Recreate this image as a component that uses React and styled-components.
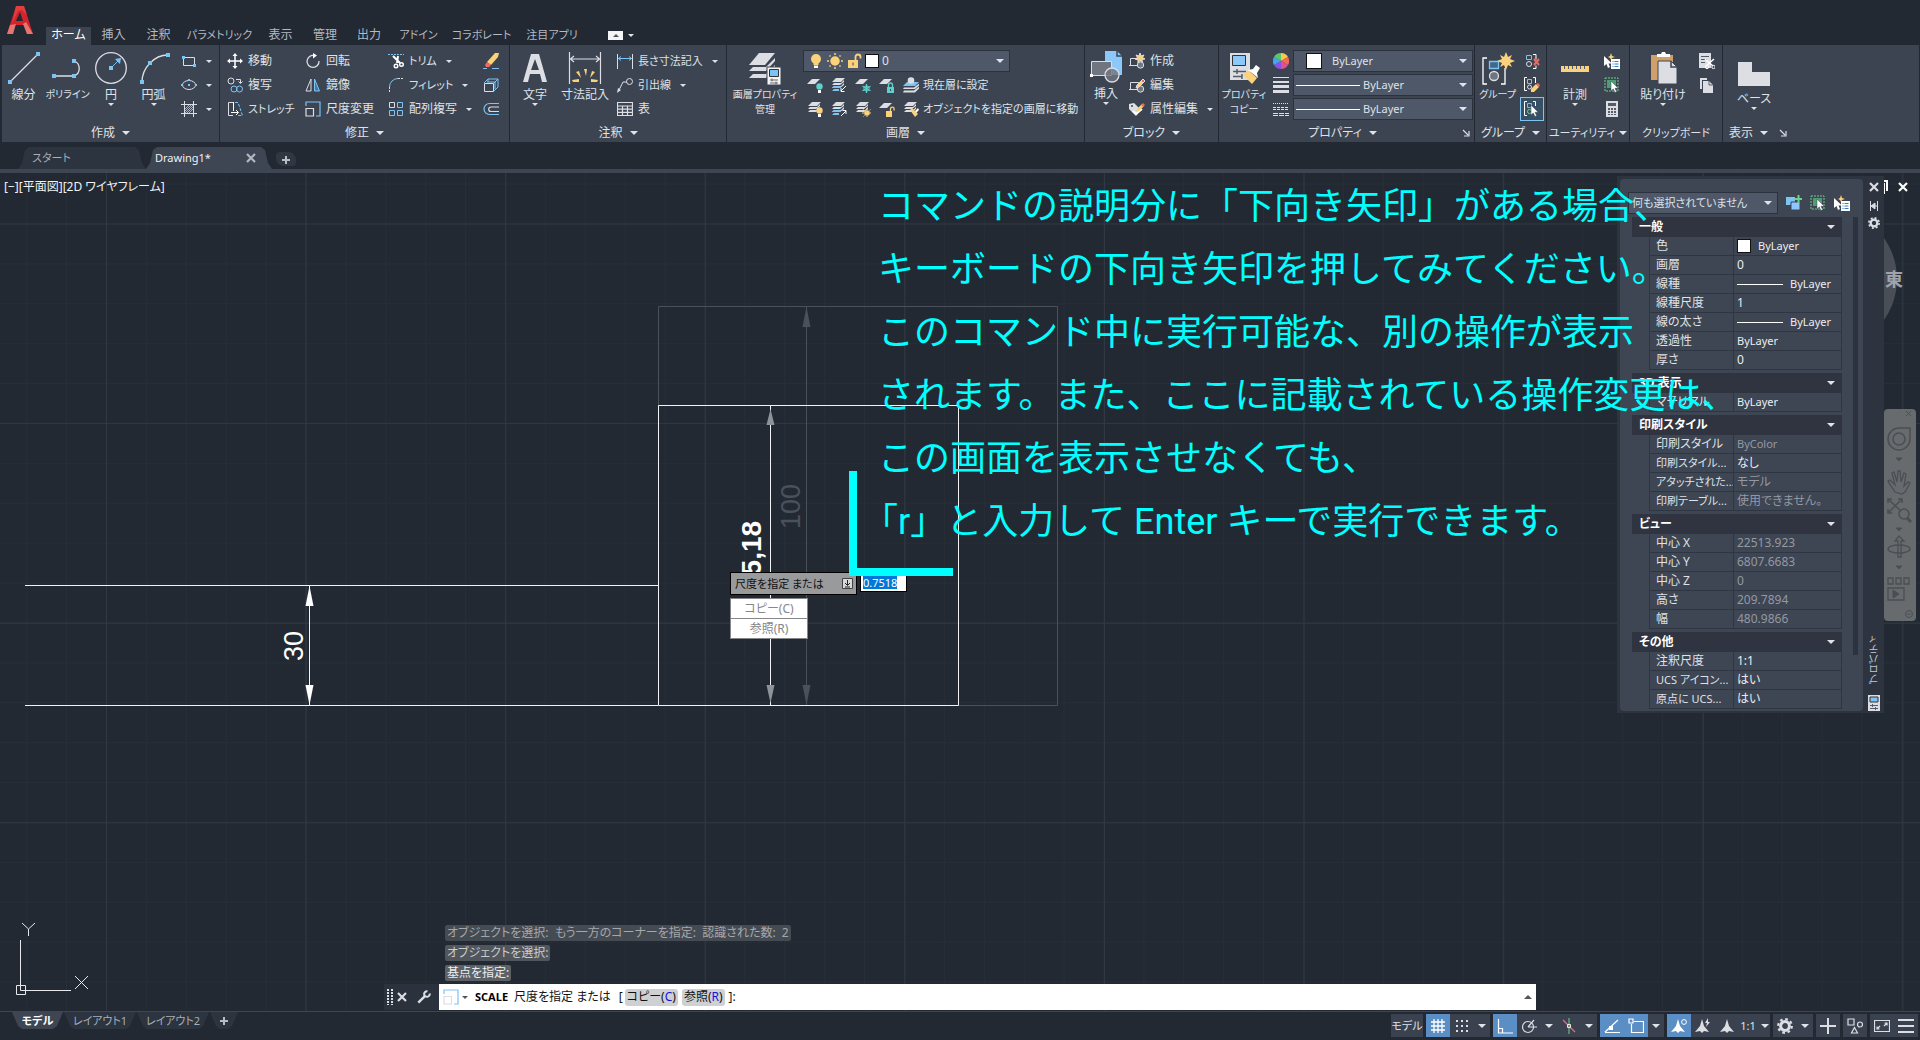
import styled, { createGlobalStyle } from "styled-components";

const W = "#dcdee3";
const B = "#7cc4f4";
const Y = "#fbd27c";
const G = "#6fd08c";
const P = "#3c4452";

const GlobalStyle = createGlobalStyle`
  * {
    box-sizing: border-box;
  }

  body {
    margin: 0;
    overflow: hidden;
    background-color: #222933;
    color: #dfe2e7;
    font-family: "Noto Sans", "Noto Sans CJK JP", sans-serif;
    font-size: 12px;
    line-height: 16px;
    font-feature-settings: "palt";
  }

  button, select, input {
    font: inherit;
    font-feature-settings: inherit;
    color: inherit;
    margin: 0;
    padding: 0;
    border: none;
    background: none;
    white-space: nowrap;
  }

  svg {
    display: block;
    flex: none;
  }
`;

/* ---------- icons, 16 grid ---------- */

const sheets = (
  <g fill={W}>
    <path d="M5 1h9l-4 4H1z" />
    <path d="M1 8l2-2h7l3-3v2l-4 3z" />
    <path d="M1 11l2-2h7l3-3v2l-4 3z" />
  </g>
);
const cursor = <path d="M7 4v10l2.300-2 1.600 3.500 1.800-.800L11 11.300h3.200z" fill="#fff" stroke={P} strokeWidth=".5" />;
const pencil = (
  <g>
    <path d="M7 11l1-3 5-5 2 2-5 5z" fill={Y} />
    <path d="M12 4l2-2 2 2-2 2z" fill="#f0695f" />
  </g>
);
const spark = (
  <path d="M11 0l1 3 3-1-1.500 2.500L16 6l-3 .500.500 3L11 7.500 9 10V7L6 6l2.500-1.500L7 2l3 1z" fill={Y} />
);

const icons = {
  rect: (
    <g fill="none" stroke={W}>
      <path d="M2.500 4.500h11v8h-11z" />
      <path d="M1 3h3v3H1zM12 11h3v3h-3z" fill={B} stroke="none" />
    </g>
  ),
  ellipse: (
    <g fill="none" stroke={W}>
      <ellipse cx="8" cy="8" rx="6.500" ry="4.500" />
      <path d="M7 7h2v2H7zM0 7h2v2H0zM14 7h2v2h-2zM7 2h2v2H7z" fill={B} stroke="none" />
    </g>
  ),
  hatch: (
    <g fill="none" stroke={W}>
      <path d="M3.500 0v16M12.500 0v16M0 3.500h16M0 12.500h16" />
      <path d="M4 8l4-4M4 12l8-8M8 12l4-4M4 10l6-6M6 12l6-6" stroke={B} />
    </g>
  ),
  move: (
    <g stroke="#fff" strokeWidth="1.500" fill="#fff">
      <path d="M8 2v12M2 8h12" />
      <path d="M8 0l2.500 3h-5zM8 16l2.500-3h-5zM0 8l3-2.500v5zM16 8l-3-2.500v5z" stroke="none" />
    </g>
  ),
  copy: (
    <g fill="none" stroke={W}>
      <circle cx="4" cy="4" r="3" />
      <path d="M9 2.500h4.500V6M11.500 4.500l2 2 2-2" />
      <circle cx="7" cy="12" r="3" stroke={B} />
      <circle cx="12.500" cy="12" r="3" stroke={B} />
    </g>
  ),
  stretch: (
    <g fill="none" stroke={W}>
      <path d="M6 1.500H1.500v13H6" />
      <path d="M6.500 1v9M4 11.500h7M9 9l2.500 2.500L9 14" stroke="#fff" />
      <path d="M8 1.500h3l4.500 13H11" stroke={B} strokeDasharray="3 1.500" />
    </g>
  ),
  rotate: (
    <g fill="none" stroke={W} strokeWidth="1.300">
      <path d="M9 2.500A6 6 0 1 0 14 8" />
      <path d="M8 0l4 2.500L8 5.500z" fill="#fff" stroke="none" />
    </g>
  ),
  mirror: (
    <g fill="none" stroke={W}>
      <path d="M6 2v12H1z" />
      <path d="M9.500 2v12h5z" stroke={B} fill="#4578a0" />
    </g>
  ),
  scale: (
    <g fill="none" stroke={B} strokeWidth="1.200">
      <path d="M1 5V1h14v14h-4" />
      <path d="M1 7.500h7.500V15H1z" stroke={W} />
    </g>
  ),
  trim: (
    <g fill="none" stroke="#fff" strokeWidth="1.400">
      <path d="M0 1.500h16" strokeDasharray="2 1" stroke={B} strokeWidth="1" />
      <path d="M5 3l7 7M10 3L9 10" strokeWidth="2" />
      <circle cx="8" cy="13" r="1.800" />
      <circle cx="13.500" cy="11.500" r="1.800" />
    </g>
  ),
  fillet: (
    <g fill="none" stroke={W}>
      <path d="M1.500 15v-5M10 1.500h6" strokeDasharray="2 1" />
      <path d="M1.500 10A8.500 8.500 0 0 1 10 1.500" stroke={B} />
    </g>
  ),
  array: (
    <g fill="none" stroke={B}>
      <path d="M1.500 1.500h5v5h-5z" stroke={W} />
      <path d="M9.500 1.500h5v5h-5zM1.500 9.500h5v5h-5zM9.500 9.500h5v5h-5z" />
    </g>
  ),
  erase: (
    <g>
      <path d="M4 9l8-9h4l-1 4-7 8z" fill={Y} />
      <path d="M4 9l4 3-2 2H3l-1-2z" fill="#f0695f" />
      <path d="M0 15.500h4M9 15.500h7" stroke={B} />
    </g>
  ),
  box3d: (
    <g fill="none" stroke={B}>
      <path d="M1 6l4-4h10v8l-4 4M5 2v3M11 6l4-4" />
      <path d="M1.500 6.500h9v8h-9z" stroke={W} />
      <path d="M4 5h8v7" />
    </g>
  ),
  offset: (
    <g fill="none" stroke={W} strokeWidth="1.200">
      <path d="M16 2.500H6.500a5.500 5.500 0 0 0 0 11H16" stroke={B} />
      <path d="M16 6H8a2.200 2.200 0 0 0 0 4.500h8" />
    </g>
  ),
  linear: (
    <g fill="none" stroke={W}>
      <path d="M.500 1v15M15.500 1v15" />
      <path d="M1 5.500h14M4 3.500l-2.500 2L4 7.500M12 3.500l2.500 2-2.500 2" stroke={B} />
    </g>
  ),
  leader: (
    <g fill="none" stroke={W}>
      <path d="M2 13L6 5h4" />
      <circle cx="12.500" cy="4.500" r="3" />
      <path d="M0 16l1-5 3 2z" fill={W} stroke="none" />
    </g>
  ),
  table: (
    <path d="M.500 1.500h15v13H.500zM.500 5h15M.500 8.200h15M.500 11.400h15M5.500 5v10M10.500 5v10" fill="none" stroke={W} strokeWidth="1.200" />
  ),
  bulb: (
    <g>
      <circle cx="8" cy="6" r="5" fill={Y} />
      <path d="M5.500 9h5v3h-5z" fill={Y} />
      <path d="M6 12.500h4V15H6z" fill="#fff" />
    </g>
  ),
  sun: (
    <g stroke={Y} strokeWidth="1.500">
      <circle cx="8" cy="8" r="4" fill={Y} />
      <path d="M8 0v2M8 14v2M0 8h2M14 8h2M2.500 2.500l1 1M12.500 12.500l1 1M13.500 2.500l-1 1M3.500 12.500l-1 1" />
    </g>
  ),
  unlock: (
    <g>
      <path d="M2 7h10v8H2z" fill={Y} />
      <path d="M9.500 8V4a2.500 2.500 0 0 1 5 0v1.500" fill="none" stroke={Y} strokeWidth="1.800" />
      <path d="M6.500 9.500h1v3h-1z" fill={P} />
    </g>
  ),
  layOff: (
    <g>
      <path d="M5 2h8L8 7H0z" fill={W} />
      <circle cx="12.500" cy="9.500" r="3.200" fill="#5fd0cc" />
      <path d="M11 13h3v3h-3z" fill="#fff" />
    </g>
  ),
  layIso: (
    <g>
      {sheets}
      <path d="M1 11l2-2h7l-1 2zM1 14l2-2h5v2z" fill={B} />
      <path d="M15 9l-5 5M10 11v3.500h3.500" fill="none" stroke="#fff" />
    </g>
  ),
  layFreeze: (
    <g>
      <path d="M5 2h8L8 7H0z" fill={W} />
      <path d="M11.500 7v9M7.500 9.200l8 4.600M15.500 9.200l-8 4.600" stroke="#5fd0cc" strokeWidth="1.300" />
      <circle cx="11.500" cy="11.500" r="2.600" fill="none" stroke="#5fd0cc" />
    </g>
  ),
  layLock: (
    <g>
      <path d="M5 2h8L8 7H0z" fill={W} />
      <path d="M8 10h7v6H8z" fill="#5fd0cc" />
      <path d="M9.500 10V8a2 2 0 0 1 4 0v2" fill="none" stroke="#5fd0cc" strokeWidth="1.400" />
      <path d="M11 12h1v2h-1z" fill={P} />
    </g>
  ),
  layCurrent: (
    <g>
      <path d="M0 9l4-4h12l-4 4z" fill={B} />
      <circle cx="8" cy="3.500" r="3.300" fill={W} />
      <path d="M0 12l1-1.500h10l5-4v2l-4 3.500zM0 15.500l1-2h10l5-4v2l-4 4z" fill={W} />
    </g>
  ),
  layOn: (
    <g>
      {sheets}
      <circle cx="12.500" cy="9.500" r="3.200" fill={Y} />
      <path d="M11 13h3v3h-3z" fill="#fff" />
    </g>
  ),
  layUniso: (
    <g>
      {sheets}
      <path d="M1 11l2-2h7l-1 2zM1 14l2-2h5v2z" fill={B} />
      <path d="M10 15l5-5M11.500 9.500H15V13" fill="none" stroke="#fff" />
    </g>
  ),
  layThaw: (
    <g>
      {sheets}
      <circle cx="12" cy="12" r="2.800" fill={Y} />
      <path d="M12 7v2M12 15v1M7 12h2M15 12h1M8.500 8.500l1 1M15.500 8.500l-1 1M8.500 15.500l1-1" stroke={Y} />
    </g>
  ),
  layUnlock: (
    <g>
      <path d="M5 2h8L8 7H0z" fill={W} />
      <path d="M7 10h6v6H7z" fill={Y} />
      <path d="M11.500 10V8a1.800 1.800 0 0 1 3.600 0v1.500" fill="none" stroke={Y} strokeWidth="1.300" />
    </g>
  ),
  layMatch: (
    <g>
      {sheets}
      <path d="M7 9l2-2 6 6-3 3z" fill={Y} />
      <path d="M12 10l3-3 1 2-3 3z" fill="#fff" />
    </g>
  ),
  blkCreate: (
    <g fill="none" stroke={W}>
      <path d="M1.500 5.500h8v7h-8zM0 12.500h3" />
      <circle cx="11.500" cy="12" r="3.200" fill="#70757f" />
      {spark}
    </g>
  ),
  blkEdit: (
    <g fill="none" stroke={W}>
      <path d="M1.500 5.500h8v7h-8zM0 12.500h3" />
      <circle cx="11.500" cy="12" r="3.200" fill="#70757f" />
      {pencil}
    </g>
  ),
  blkAttr: (
    <g>
      <path d="M0 3l5-1 7 7-5 6-7-7z" fill={W} />
      <path d="M4 10l3 3 6-5" fill="none" stroke="#fff" strokeWidth="2" />
      <circle cx="3" cy="5" r="1" fill={P} />
      {pencil}
    </g>
  ),
  wheel: (
    <g>
      <path d="M8 8V0a8 8 0 0 1 7 4z" fill="#f7c84c" />
      <path d="M8 8l7-4a8 8 0 0 1 0 8z" fill="#f0695f" />
      <path d="M8 8l7 4a8 8 0 0 1-7 4z" fill="#e0508c" />
      <path d="M8 8v8a8 8 0 0 1-7-4z" fill="#8a50e8" />
      <path d="M8 8l-7 4a8 8 0 0 1 0-8z" fill="#4aa4ec" />
      <path d="M8 8L1 4a8 8 0 0 1 7-4z" fill="#5cc46c" />
    </g>
  ),
  weight: <path d="M0 0h16v1H0zM0 4h16v2H0zM0 8h16v3H0zM0 13h16v3H0z" fill={W} />,
  ltype: (
    <g stroke={W} fill="none">
      <path d="M0 2.500h16" strokeDasharray="1 1" />
      <path d="M0 6.500h16M0 8.500h16" strokeDasharray="3 1" />
      <path d="M0 12.500h16M0 14.500h16" strokeDasharray="5 1" />
    </g>
  ),
  ungroup: (
    <g fill="none" stroke={W}>
      <path d="M9 1.500h3v5M9 15.500h3v-3" stroke="#fff" />
      <path d="M2.500 2.500h5v4h-5z" stroke={B} />
      <circle cx="5" cy="11" r="2.500" />
      <path d="M10 6l5 6M15 6l-5 6" stroke="#f0695f" strokeWidth="2" />
    </g>
  ),
  groupEdit: (
    <g fill="none" stroke={W}>
      <path d="M3 .500H.500v13H3M9 .500h2.500V6" stroke="#fff" />
      <path d="M3.500 2.500h4v4h-4z" stroke={B} />
      <circle cx="5.500" cy="10" r="2" />
      <path d="M7 15v-3l5-5 3 3-5 5z" fill={Y} stroke="none" />
      <path d="M12 7l2-1 2 2-1 2z" fill="#f0695f" stroke="none" />
    </g>
  ),
  groupSel: (
    <g fill="none" stroke={G}>
      <path d="M3 .500H.500v14H3M9 .500h2.500V5" stroke="#fff" />
      <path d="M3.500 2.500h4v4h-4z" />
      <circle cx="5.500" cy="10.500" r="2" />
      {cursor}
    </g>
  ),
  quickSel: (
    <g>
      <path d="M0 3v10l2.500-2L4 15l2-1-1.500-3.500H8z" fill="#fff" />
      <path d="M7 0l1 3 3 1-3 1-1 2-1-2-2-1 2-1z" fill={Y} />
      <path d="M7 6h9v10H7z" fill="#fff" />
      <path d="M8.500 8.500h1M8.500 11h1M8.500 13.500h1M10.500 8.500h4M10.500 11h4M10.500 13.500h4" stroke="#2f80c8" />
    </g>
  ),
  selectAll: (
    <g>
      <path d="M1 1h13v13H1z" fill="none" stroke={G} strokeDasharray="2 1" />
      <path d="M3 3h9v8H3z" fill="#4e9c74" />
      {cursor}
    </g>
  ),
  calc: (
    <g>
      <path d="M2 0h12v16H2z" fill={W} />
      <path d="M4 2h8v3H4zM4 7h2v2H4zM7 7h2v2H7zM10 7h2v2h-2zM4 10h2v2H4zM7 10h2v2H7zM10 10h2v2h-2zM4 13h2v1H4zM7 13h2v1H7zM10 13h2v1h-2z" fill="#555c68" />
    </g>
  ),
  cut: (
    <g fill="none" stroke="#555c68">
      <path d="M0 0h12v15H0z" fill={W} stroke="none" />
      <path d="M2 3.500h8M2 6.500h6M2 9.500h4" />
      <path d="M6 6l8 7M15 6l-8 7" stroke="#fff" strokeWidth="1.500" />
      <circle cx="8" cy="14" r="1.700" stroke="#fff" />
      <circle cx="14.500" cy="14" r="1.700" stroke="#fff" />
    </g>
  ),
  copyClip: (
    <g>
      <path d="M1 1h7v2H3v9H1z" fill={W} />
      <path d="M4 4h6l4 4v8H4z" fill={W} />
      <path d="M10 4v4h4" fill="none" stroke="#555c68" />
    </g>
  ),
  pickAdd: (
    <g>
      <path d="M0 2h9v8H0z" fill={B} />
      <path d="M5 7h9v8H5z" fill="#8cc8ff" stroke={P} />
      <path d="M12.500 0v8M8.500 4h8" stroke={G} strokeWidth="2" />
    </g>
  ),
  close: <path d="M4 4l8 8M12 4l-8 8" stroke="currentColor" strokeWidth="2.200" />,
  wrench: (
    <g fill="none" stroke={W} strokeWidth="2.300">
      <path d="M1.500 14.500L9 7" strokeWidth="2.800" />
      <path d="M12 1.500A3.200 3.200 0 1 0 14.500 4" />
    </g>
  ),
  autohide: <path d="M4.500 3v10M11.500 3v10M5 8l4-3v6zM8 8h3" stroke={W} fill={W} />,
  gear: (
    <g fill="none" stroke={W}>
      <circle cx="8" cy="8" r="4.400" strokeWidth="3" />
      <circle cx="8" cy="8" r="6.800" strokeWidth="2.200" strokeDasharray="2.670 2.670" />
    </g>
  ),
  palette: (
    <g>
      <path d="M2 0h12v16H2z" fill={W} />
      <path d="M4 2h8v5H4z" fill={B} stroke="#333" />
      <path d="M4 10.500h8M4 13.500h8M6.500 9v3M9.500 12v3" stroke="#555c68" />
    </g>
  ),
  grid: <path d="M4 1v14M8 1v14M12 1v14M1 4h14M1 8h14M1 12h14" stroke="#fff" strokeWidth="1.300" />,
  snap: (
    <path d="M2 2h2v2H2zM7 2h2v2H7zM12 2h2v2h-2zM2 7h2v2H2zM7 7h2v2H7zM12 7h2v2h-2zM2 12h2v2H2zM7 12h2v2H7zM12 12h2v2h-2z" fill={W} />
  ),
  ortho: <path d="M1.500 1v14H16M1.500 10.500h4V15" fill="none" stroke="#fff" strokeWidth="1.200" />,
  polar: (
    <g fill="none" stroke={W} strokeWidth="1.200">
      <circle cx="7" cy="9" r="5.500" />
      <path d="M7 9l6-7M7 9h9" />
    </g>
  ),
  iso: (
    <g>
      <path d="M8 0v16" stroke={G} />
      <path d="M2 2l12 12" stroke="#e06c8c" strokeWidth="1.200" />
      <path d="M6.500 6.500h3v3h-3z" fill="none" stroke="#e8e8d8" />
    </g>
  ),
  otrack: (
    <g fill="none" stroke="#fff" strokeWidth="1.200">
      <path d="M1 14.500h15M1 14L14 2" />
      <path d="M5 8h4v4H5z" fill="#fff" stroke="none" />
    </g>
  ),
  osnap: <path d="M6 3.500h9.500v11h-12V6M1 1h4v4H1z" fill="none" stroke="#fff" strokeWidth="1.200" />,
  anno: (
    <g>
      <path d="M7 1l2 7 5 6-5-1-2 2-2-2-5 1 5-6z" fill="#fff" />
      <circle cx="13" cy="4" r="2.400" fill="none" stroke="#fff" />
    </g>
  ),
  annoAuto: (
    <g fill={W}>
      <path d="M7 1l2 7 5 6-5-1-2 2-2-2-5 1 5-6z" />
      <path d="M13 0l-3 5h2l-1 4 4-5h-2z" />
    </g>
  ),
  annoScale: <path d="M8 1l2 7 5 6-5-1-2 2-2-2-5 1 5-6z" fill={W} />,
  plus: <path d="M8 0v16M0 8h16" stroke={W} strokeWidth="2" />,
  smallPlus: <path d="M8 4v8M4 8h8" stroke="#b8bcc4" strokeWidth="2" />,
  isolate: (
    <g fill="none" stroke={W} strokeWidth="1.200">
      <path d="M1 1h6v6H1z" />
      <circle cx="13" cy="6.500" r="2.500" />
      <path d="M7.500 9.500l3 5.500h-6z" />
    </g>
  ),
  full: <path d="M.500 2.500h15v11H.500zM3 11l3-3M3 8.500V11h2.500M13 5l-3 3M10.500 5H13v2.500" fill="none" stroke={W} strokeWidth="1.200" />,
  menu: <path d="M0 2h16M0 8h16M0 14h16" stroke={W} strokeWidth="2" />,
  launcher: <path d="M5 5l5 5M11 6v5H6" fill="none" stroke={W} strokeWidth="1.200" />,
  grip: <path d="M6 0v16M10 0v16" stroke={W} strokeWidth="2" strokeDasharray="2 1" />,
};

/* ---------- icons, 32 grid ---------- */

const bigIcons = {
  line: (
    <g>
      <path d="M2 30L30 2" stroke={W} strokeWidth="1.300" />
      <path d="M0 28h4v4H0zM28 0h4v4h-4z" fill={B} />
    </g>
  ),
  polyline: (
    <g>
      <path d="M2 24h20M22 9a8 8 0 0 1 0 15" fill="none" stroke={W} strokeWidth="1.300" />
      <path d="M0 22h4v4H0zM20 7h4v4h-4zM20 22h4v4h-4z" fill={B} />
    </g>
  ),
  circle: (
    <g>
      <circle cx="16" cy="16" r="15.300" fill="none" stroke={W} strokeWidth="1.300" />
      <path d="M16 16l8-8" stroke={B} />
      <path d="M14 14h4v4h-4zM26 6l-1 6-5-5z" fill={B} />
    </g>
  ),
  arc: (
    <g>
      <path d="M4 30C4 16 16 3 30 3" fill="none" stroke={W} strokeWidth="1.300" />
      <path d="M2 28h4v4H2zM10 9h4v4h-4zM28 1h4v4h-4z" fill={B} />
    </g>
  ),
  text: <path d="M12 2h8l8 28h-5l-2-8H11l-2 8H4zM16 7l-4 11h8z" fill={W} fillRule="evenodd" />,
  dim: (
    <g fill="none" stroke={W}>
      <path d="M.500 0v32M31.500 0v32M1 7h30M5 4L1.500 7 5 10M27 4l3.500 3-3.500 3" strokeWidth="1.200" />
      <path d="M15 17h3l-1 7zM7 20l3-1 2 7zM26 20l-3-1-2 7zM3 28l7-1v3H4zM29 28l-7-1v3h6z" fill={Y} stroke="none" />
    </g>
  ),
  layers: (
    <g fill={W}>
      <path d="M10 1h16L16 13H0z" />
      <path d="M0 19l4-4h13l9-9v3L17 19z" />
      <path d="M0 26l4-4h13l9-9v3L17 26z" />
      <path d="M18 15h14v18H18z" fill="#f4f4f4" stroke={P} />
      <path d="M20.500 17.500h9v7h-9z" fill={B} stroke="#333" />
      <path d="M21 28h8M21 31h8M23 26.500v3M27 29.500v3" stroke="#666" />
    </g>
  ),
  insert: (
    <g>
      <path d="M15 0h12l5 5v19H15z" fill="#8cc8fa" />
      <path d="M27 0v5h5" fill="none" stroke={P} strokeWidth="1.500" />
      <path d="M1.500 10.500h20v14h-20z" fill="#70757f" stroke={W} />
      <circle cx="22" cy="24" r="7" fill="#70757fcc" stroke={W} strokeWidth="1.300" />
      <path d="M0 23h3v3H0z" fill="#fff" />
    </g>
  ),
  match: (
    <g>
      <path d="M2 1h20v27H2z" fill={W} />
      <path d="M4.500 3.500h13v10h-13z" fill="#8cc8fa" stroke="#333" />
      <path d="M5 19.500h13M5 24.500h9M9 17v5M14 22v5" stroke="#555c68" strokeWidth="1.500" />
      <path d="M15 23l5-5 9 8-5 6z" fill={Y} />
      <path d="M20 18l5-1 3-4 4 3-3 5 1 5z" fill="#fff" />
    </g>
  ),
  group: (
    <g fill="none" stroke="#fff" strokeWidth="1.300">
      <path d="M5 6H1v26h4M19 32h4V16" />
      <path d="M7.500 9.500h9v7h-9z" fill="#41678c" stroke={B} />
      <circle cx="12" cy="24" r="4.500" fill="#70757f" stroke={W} />
      <path d="M24 0l2 5 4-2-2 4 5 2-5 2 2 4-4-2-2 5-2-5-4 2 2-4-5-2 5-2-2-4 4 2z" fill={Y} stroke="none" />
    </g>
  ),
  measure: (
    <g>
      <path d="M2 14h28v6H2z" fill={Y} />
      <path d="M5.500 14v3M9.500 14v3M13.500 14v3M17.500 14v3M21.500 14v3M25.500 14v3" stroke="#555c68" />
    </g>
  ),
  paste: (
    <g>
      <path d="M4 3h22v25H4z" fill="#d0a068" />
      <path d="M10 5V2h4l1-2h3l1 2h4v3z" fill="#fff" />
      <path d="M11 9h13l6 6v17H11z" fill={W} stroke={P} />
      <path d="M24 9v6h6" fill="none" stroke={P} strokeWidth="1.500" />
    </g>
  ),
  base: <path d="M0 6h14v10h18v14H0z" fill={W} />,
};

const Icon = ({ name, size = 16 }) => (
  <svg width={size} height={size} viewBox="0 0 16 16" aria-hidden="true">
    {icons[name]}
  </svg>
);

const BigIcon = ({ name }) => (
  <svg width="32" height="32" viewBox="0 0 32 32" overflow="visible" aria-hidden="true">
    {bigIcons[name]}
  </svg>
);

/* ---------- shared parts ---------- */

const Window = styled.div`
  display: flex;
  flex-direction: column;
  height: 100vh;
`;

const Caret = styled.span`
  flex: none;
  width: 0;
  height: 0;
  border: ${({ $s = 3 }) => $s}px solid transparent;
  border-top-width: ${({ $s = 3 }) => $s}px;
  border-top-color: #dfe2e7;
  border-bottom: none;
`;

/* ---------- ribbon ---------- */

const Header = styled.header`
  display: flex;
  align-items: flex-end;
  height: 45px;
`;

const Logo = styled.svg`
  width: 46px;
  height: 30px;
  margin-bottom: 10px;
`;

const RibbonTab = styled.button`
  width: ${({ $w }) => $w}px;
  height: 18px;
  padding-bottom: 2px;
  color: ${({ $on }) => ($on ? "#fff" : "#b4b9c2")};
  background-color: ${({ $on }) => ($on ? "#3c4452" : "transparent")};
  font-size: ${({ $small }) => ($small ? 11 : 12)}px;
  line-height: 16px;
`;

const MinimizeButton = styled.button`
  display: flex;
  align-items: center;
  gap: 5px;
  height: 18px;
  margin-left: 21px;
  padding-bottom: 2px;
`;

const MinimizeBox = styled.span`
  width: 15px;
  height: 9px;
  background-color: #f4f5f7;
  display: grid;
  place-items: center;

  &::after {
    content: "";
    border: 3px solid transparent;
    border-top: none;
    border-bottom-color: #555;
  }
`;

const Ribbon = styled.div`
  display: flex;
  gap: 1px;
  height: 97px;
  padding: 0 1px 0 2px;
`;

const Panel = styled.section`
  display: flex;
  flex-direction: column;
  width: ${({ $w }) => ($w ? `${$w}px` : "auto")};
  flex: ${({ $w }) => ($w ? "none" : 1)};
  background-color: #3c4452;
  overflow: hidden;
`;

const PanelBody = styled.div`
  display: flex;
  height: 79px;
  padding: 4px 0 0 ${({ $pad = 0 }) => $pad}px;
`;

const PanelTitle = styled.button`
  display: flex;
  align-items: center;
  justify-content: ${({ $left }) => ($left ? "flex-start" : "center")};
  gap: 7px;
  height: 18px;
  padding: 0 6px;
`;

const TitleWithLauncher = styled.div`
  display: grid;
  grid-template-columns: 1fr 16px;
  align-items: center;
  padding-left: 8px;
`;

const SmallTitle = styled(PanelTitle)`
  gap: 4px;
  padding: 0;
  font-size: 11px;
`;

const BigButton = styled.button`
  display: flex;
  flex-direction: column;
  align-items: center;
  width: ${({ $w = 44 }) => $w}px;
  padding-top: ${({ $top = 3 }) => $top}px;
  flex: none;
  height: 75px;
`;

const BigLabel = styled.span`
  margin: 3px 0 1px;
  line-height: 15px;
  font-size: ${({ $small }) => ($small ? 10 : 12)}px;
  white-space: pre;
`;

const Tools = styled.div`
  display: grid;
  grid-template-columns: ${({ $cols = "auto" }) => $cols};
  grid-auto-rows: 24px;
  align-content: start;
  padding-left: ${({ $pad = 0 }) => $pad}px;
`;

const Tool = styled.button`
  display: flex;
  align-items: center;
  gap: 5px;
  height: 24px;
  font-size: ${({ $small }) => ($small ? 11 : 12)}px;

  ${Caret} {
    margin-left: 4px;
  }
`;

const IconTool = styled.button`
  display: grid;
  place-items: center;
  width: 24px;
  height: 24px;
  border: 1px solid ${({ $on }) => ($on ? B : "transparent")};
  background-color: ${({ $on }) => ($on ? "#375064" : "transparent")};
`;

const Combo = styled.label`
  display: flex;
  align-items: center;
  gap: ${({ $gap = 5 }) => $gap}px;
  width: ${({ $w }) => $w}px;
  height: 22px;
  margin: ${({ $m = 1 }) => $m}px 0;
  padding: 0 5px 0 ${({ $pad = 2 }) => $pad}px;
  background-color: #4e5869;
  border: 1px solid #2b323e;

  select {
    flex: 1;
    min-width: 0;
    appearance: none;
    font-size: ${({ $fs = 11 }) => $fs}px;
    outline: none;
  }
`;

const Swatch = styled.span`
  flex: none;
  width: ${({ $s = 14 }) => $s}px;
  height: ${({ $s = 14 }) => $s}px;
  background-color: #fff;
  border: 1px solid #111;
`;

const LinePreview = styled.span`
  flex: none;
  width: ${({ $w = 64 }) => $w}px;
  height: 1px;
  background-color: #fff;
`;

const LayerBox = styled.div`
  display: flex;
  flex-direction: column;
  align-items: flex-start;
`;

const Row = styled.div`
  display: flex;
  align-items: center;
  height: 24px;
  font-size: 11px;
  white-space: nowrap;
`;

const Big = ({ icon, label, w, top, small, caret }) => (
  <BigButton $w={w} $top={top}>
    <BigIcon name={icon} />
    <BigLabel $small={small}>{label}</BigLabel>
    {caret && <Caret />}
  </BigButton>
);

const Small = ({ icon, label, small, caret }) => (
  <Tool $small={small} aria-label={label || icon}>
    <Icon name={icon} />
    {label}
    {caret && <Caret />}
  </Tool>
);

const Title = ({ children, caret = true }) => (
  <PanelTitle>
    {children}
    {caret && <Caret $s={4} />}
  </PanelTitle>
);

const ribbonTabs = [
  ["ホーム", 45],
  ["挿入", 45],
  ["注釈", 45],
  ["パラメトリック", 77],
  ["表示", 45],
  ["管理", 44],
  ["出力", 44],
  ["アドイン", 55],
  ["コラボレート", 71],
  ["注目アプリ", 70],
];

const layerTools = [
  ["layOff", "layIso", "layFreeze", "layLock", "layCurrent"],
  ["layOn", "layUniso", "layThaw", "layUnlock", "layMatch"],
];

function RibbonBar() {
  return (
    <Ribbon>
      <Panel $w={217}>
        <PanelBody>
          <Big icon="line" label="線分" w={43} />
          <Big icon="polyline" label="ポリライン" small w={45} />
          <Big icon="circle" label="円" w={42} caret />
          <Big icon="arc" label="円弧" w={43} caret />
          <Tools $pad={6}>
            <Small icon="rect" caret />
            <Small icon="ellipse" caret />
            <Small icon="hatch" caret />
          </Tools>
        </PanelBody>
        <Title>作成</Title>
      </Panel>
      <Panel $w={289}>
        <PanelBody $pad={7}>
          <Tools $cols="78px 83px 95px 20px">
            <Small icon="move" label="移動" />
            <Small icon="rotate" label="回転" />
            <Small icon="trim" label="トリム" small caret />
            <Small icon="erase" />
            <Small icon="copy" label="複写" />
            <Small icon="mirror" label="鏡像" />
            <Small icon="fillet" label="フィレット" small caret />
            <Small icon="box3d" />
            <Small icon="stretch" label="ストレッチ" small />
            <Small icon="scale" label="尺度変更" />
            <Small icon="array" label="配列複写" caret />
            <Small icon="offset" />
          </Tools>
        </PanelBody>
        <Title>修正</Title>
      </Panel>
      <Panel $w={216}>
        <PanelBody>
          <Big icon="text" label="文字" w={50} caret />
          <Big icon="dim" label="寸法記入" w={50} />
          <Tools $pad={7}>
            <Small icon="linear" label="長さ寸法記入" small caret />
            <Small icon="leader" label="引出線" small caret />
            <Small icon="table" label="表" />
          </Tools>
        </PanelBody>
        <Title>注釈</Title>
      </Panel>
      <Panel $w={357}>
        <PanelBody>
          <Big icon="layers" label={"画層プロパティ\n管理"} w={76} small />
          <LayerBox>
            <Combo $w={207} $pad={4} $gap={3} $fs={12}>
              <Icon name="bulb" />
              <Icon name="sun" />
              <Icon name="unlock" />
              <Swatch />
              <select aria-label="画層">
                <option>0</option>
              </select>
              <Caret $s={4} />
            </Combo>
            {layerTools.map((row, i) => (
              <Row key={i}>
                {row.map((name) => (
                  <IconTool key={name} aria-label={name}>
                    <Icon name={name} />
                  </IconTool>
                ))}
                <span>{i === 0 ? "現在層に設定" : "オブジェクトを指定の画層に移動"}</span>
              </Row>
            ))}
          </LayerBox>
        </PanelBody>
        <Title>画層</Title>
      </Panel>
      <Panel $w={133}>
        <PanelBody>
          <Big icon="insert" label="挿入" w={42} top={2} caret />
          <Tools $pad={2}>
            <Small icon="blkCreate" label="作成" />
            <Small icon="blkEdit" label="編集" />
            <Small icon="blkAttr" label="属性編集" caret />
          </Tools>
        </PanelBody>
        <Title>ブロック</Title>
      </Panel>
      <Panel $w={255}>
        <PanelBody>
          <Big icon="match" label={"プロパティ\nコピー"} w={50} small />
          <Tools $cols="24px 180px">
            <IconTool aria-label="オブジェクトの色">
              <Icon name="wheel" />
            </IconTool>
            <Combo $w={180} $pad={12} $gap={10}>
              <Swatch $s={16} />
              <select aria-label="色">
                <option>ByLayer</option>
              </select>
              <Caret $s={4} />
            </Combo>
            <IconTool aria-label="線の太さ">
              <Icon name="weight" />
            </IconTool>
            <Combo $w={180} $gap={3}>
              <LinePreview />
              <select aria-label="線の太さ">
                <option>ByLayer</option>
              </select>
              <Caret $s={4} />
            </Combo>
            <IconTool aria-label="線種">
              <Icon name="ltype" />
            </IconTool>
            <Combo $w={180} $gap={3}>
              <LinePreview />
              <select aria-label="線種">
                <option>ByLayer</option>
              </select>
              <Caret $s={4} />
            </Combo>
          </Tools>
        </PanelBody>
        <TitleWithLauncher>
          <Title>プロパティ</Title>
          <Icon name="launcher" />
        </TitleWithLauncher>
      </Panel>
      <Panel $w={71}>
        <PanelBody>
          <Big icon="group" label="グループ" w={45} small />
          <Tools>
            <IconTool aria-label="グループ解除">
              <Icon name="ungroup" />
            </IconTool>
            <IconTool aria-label="グループ編集">
              <Icon name="groupEdit" />
            </IconTool>
            <IconTool $on aria-label="グループ選択">
              <Icon name="groupSel" />
            </IconTool>
          </Tools>
        </PanelBody>
        <Title>グループ</Title>
      </Panel>
      <Panel $w={82}>
        <PanelBody $pad={3}>
          <Big icon="measure" label="計測" w={50} caret />
          <Tools>
            <IconTool aria-label="クイック選択">
              <Icon name="quickSel" />
            </IconTool>
            <IconTool aria-label="すべて選択">
              <Icon name="selectAll" />
            </IconTool>
            <IconTool aria-label="計算機">
              <Icon name="calc" />
            </IconTool>
          </Tools>
        </PanelBody>
        <SmallTitle>
          ユーティリティ
          <Caret $s={4} />
        </SmallTitle>
      </Panel>
      <Panel $w={92}>
        <PanelBody $pad={8}>
          <Big icon="paste" label="貼り付け" w={50} caret />
          <Tools $pad={7}>
            <IconTool aria-label="切り取り">
              <Icon name="cut" />
            </IconTool>
            <IconTool aria-label="コピー">
              <Icon name="copyClip" />
            </IconTool>
          </Tools>
        </PanelBody>
        <SmallTitle>クリップボード</SmallTitle>
      </Panel>
      <Panel>
        <PanelBody $pad={6}>
          <Big icon="base" label="ベース" w={50} top={7} caret />
        </PanelBody>
        <PanelTitle $left>
          表示
          <Caret $s={4} />
          <Icon name="launcher" />
        </PanelTitle>
      </Panel>
    </Ribbon>
  );
}

/* ---------- file tabs ---------- */

const FileTabs = styled.nav`
  display: flex;
  align-items: flex-end;
  height: 31px;
  padding-left: 18px;
  border-bottom: 4px solid #3e4553;
`;

const FileTab = styled.div`
  display: flex;
  align-items: center;
  justify-content: space-between;
  width: ${({ $w }) => $w}px;
  height: 22px;
  padding: 0 13px 0 ${({ $pad = 14 }) => $pad}px;
  color: ${({ $on }) => ($on ? "#eef0f4" : "#a9aeb8")};
  background-color: ${({ $on }) => ($on ? "#3e4553" : "#2c343f")};
  clip-path: polygon(
    0 100%, 4px 16px, 7px 3px, 11px 0,
    calc(100% - 11px) 0, calc(100% - 7px) 3px, calc(100% - 4px) 16px, 100% 100%
  );
  font-size: 11px;
`;

const TabClose = styled.button`
  color: #b4b8c0;
`;

const NewTab = styled.button`
  display: grid;
  place-items: center;
  width: 20px;
  height: 14px;
  margin: 0 0 3px 4px;
  background-color: #2f3743;
  border-radius: 4px 8px 4px 8px;
`;

/* ---------- drawing area ---------- */

const Viewport = styled.main`
  position: relative;
  flex: 1;
  min-height: 0;
  overflow: hidden;
  border-bottom: 1px solid #3f4651;
`;

const Sheet = styled.svg`
  width: 100%;
  height: 100%;
  font-family: "Liberation Sans", sans-serif;
`;

const ViewLabel = styled.div`
  position: absolute;
  top: 5px;
  left: 4px;
  line-height: 18px;
  color: #f2f3f5;
`;

const arrow = (x, y, dir, len = 20) => `M${x} ${y}l-4 ${dir * len}h8z`;

function Drawing() {
  return (
    <Sheet>
      <defs>
        <pattern id="minor" width="39.900" height="39.900" patternUnits="userSpaceOnUse" x="106" y="50.500">
          <path d="M0 .500H40M.500 0V40" stroke="#262e38" fill="none" />
        </pattern>
        <pattern id="major" width="199.600" height="199.600" patternUnits="userSpaceOnUse" x="106" y="50.500">
          <path d="M0 .500H200M.500 0V200" stroke="#303843" fill="none" />
        </pattern>
      </defs>
      <rect width="100%" height="100%" fill="url(#minor)" />
      <rect width="100%" height="100%" fill="url(#major)" />

      <g fill="none" stroke="#4b515b">
        <path d="M658.500 133.500h399v399h-399zM806.500 134v398" />
        <path d={arrow(806.5, 134, 1)} fill="#4b515b" stroke="none" />
        <path d={arrow(806.5, 532, -1)} fill="#4b515b" stroke="none" />
      </g>
      <text transform="translate(800 356) rotate(-90)" fontSize="27" fill="#4b515b">
        100
      </text>

      <g fill="none" stroke="#f0f2f4">
        <path d="M658.500 232.500h300v300h-300zM770.500 233v300" />
        <path d="M25 412.500h633M25 532.500h633M309.500 413v119" />
        <path d={arrow(309.5, 413, 1)} fill="#fff" stroke="none" />
        <path d={arrow(309.5, 532, -1)} fill="#fff" stroke="none" />
        <path d={arrow(770.5, 236, 1, 16)} fill="#8e939a" stroke="none" />
        <path d={arrow(770.5, 530, -1, 18)} fill="#8e939a" stroke="none" />
      </g>
      <text transform="translate(303 488) rotate(-90)" fontSize="27" fill="#fff">
        30
      </text>
      <text transform="translate(761 418) rotate(-90)" fontSize="28" fontWeight="bold" fill="#fff">
        75,18
      </text>

      <g fill="none" stroke="#e6e8ec">
        <path d="M20.500 767v50.500H71M16.500 812.500h9v9h-9z" />
        <path d="M75 803l13 13M88 803l-13 13M22 750l6.500 6 6.500-6M28.500 756v7" />
      </g>
    </Sheet>
  );
}

const DynPrompt = styled.form`
  position: absolute;
  top: 399px;
  left: 730px;
  display: grid;
  grid-template-columns: 127px auto;
  align-items: start;
  gap: 3px;
  color: #111;
`;

const PromptText = styled.label`
  display: flex;
  align-items: center;
  justify-content: space-between;
  height: 23px;
  padding: 0 3px 0 4px;
  background-color: #999a9b;
  border: 1px solid #000;
  font-size: 11px;
`;

const DownKey = styled.svg`
  width: 11px;
  height: 11px;
`;

const PromptBox = styled.span`
  display: flex;
  align-items: center;
  width: 47px;
  height: 20px;
  padding-left: 2px;
  background-color: #fff;
  border: 1px solid #000;
`;

const PromptInput = styled.input`
  width: 34px;
  height: 13px;
  font-size: 11px;
  line-height: 13px;
  color: #fff;
  background-color: #0078d7;
`;

const PromptMenu = styled.div`
  display: flex;
  flex-direction: column;
  width: 78px;
  border: 1px solid #85878a;

  button {
    height: 19px;
    color: #85878a;
    background-color: #fff;
  }

  button + button {
    height: 20px;
    border-top: 1px solid #85878a;
  }
`;

const Bracket = styled.div`
  position: absolute;
  top: 298px;
  left: 849px;
  width: 104px;
  height: 105px;
  border-left: 8px solid #00ffff;
  border-bottom: 8px solid #00ffff;
`;

const Note = styled.div`
  position: absolute;
  top: 3px;
  left: 878px;
  font-family: Roboto, "Noto Sans CJK JP", sans-serif;
  font-feature-settings: normal;
  font-size: 36px;
  line-height: 63px;
  color: #00ffff;
  white-space: nowrap;

  p {
    margin: 0;
  }

  p:last-child {
    text-indent: -16px;
  }
`;

const WindowButtons = styled.div`
  position: absolute;
  top: 6px;
  right: 9px;
  display: flex;
  gap: 3px;
  color: #fff;
`;

const ViewCube = styled.div`
  position: absolute;
  top: 35px;
  right: 23px;
  width: 142px;
  height: 142px;
  border-radius: 50%;
  background-color: #4a4f57;
`;

const East = styled.span`
  position: absolute;
  top: 96px;
  right: 17px;
  font-size: 18px;
  font-weight: bold;
  line-height: 20px;
  color: #a0a4aa;
`;

const NavBar = styled.aside`
  position: absolute;
  top: 236px;
  right: 4px;
  width: 32px;
  height: 212px;
  border-radius: 4px;
  background-color: #686b6e;
`;

/* ---------- property palette ---------- */

const Palette = styled.aside`
  position: absolute;
  top: 3px;
  right: 36px;
  display: flex;
  width: 267px;
  height: 537px;
  padding: 3px 0 2px 3px;
  background-color: #2d333f;
`;

const PaletteBody = styled.div`
  flex: 1;
  overflow: hidden;
  padding: 12px 5px 0 8px;
  border-radius: 4px;
  background-color: #3e4553;
`;

const PaletteTools = styled.div`
  display: flex;
  align-items: center;
  gap: 8px;
  height: 24px;
  margin-bottom: 2px;
`;

const PaletteContent = styled.div`
  display: flex;
  justify-content: space-between;
  padding-left: 4px;
`;

const ScrollThumb = styled.div`
  width: 5px;
  height: 438px;
  background-color: #2c333f;
`;

const SectionButton = styled.button`
  display: flex;
  align-items: center;
  justify-content: space-between;
  width: 210px;
  height: 20px;
  padding: 0 7px;
  background-color: #2f3440;
  color: #fff;
  font-weight: bold;
`;

const PropTable = styled.table`
  width: 193px;
  margin: 0 0 3px 17px;
  border-spacing: 0;
  table-layout: fixed;
  border-left: 1px solid #2f3643;
`;

const NameCell = styled.th`
  width: 84px;
  height: 19px;
  padding: 0 0 0 6px;
  overflow: hidden;
  font-size: ${({ $long }) => ($long ? 11 : 12)}px;
  font-weight: normal;
  text-align: left;
  line-height: 18px;
  white-space: nowrap;
  border-right: 1px solid #2f3643;
  border-bottom: 1px solid #2f3643;
`;

const ValueCell = styled.td`
  height: 19px;
  padding: 0 0 0 3px;
  line-height: 18px;
  font-size: ${({ $latin }) => ($latin ? 11 : 12)}px;
  color: ${({ $dim }) => ($dim ? "#9399a4" : "#eceef2")};
  border-right: 1px solid #2f3643;
  border-bottom: 1px solid #2f3643;
`;

const ValueLine = styled.span`
  display: flex;
  align-items: center;
  gap: 7px;
`;

const PaletteStrip = styled.div`
  display: flex;
  flex-direction: column;
  align-items: center;
  gap: 3px;
  width: 21px;
  color: ${W};
`;

const StripTitle = styled.span`
  margin-top: auto;
  margin-bottom: 8px;
  writing-mode: vertical-rl;
  transform: rotate(180deg);
  font-size: 10px;
  color: #c4c8cf;
`;

const sections = [
  {
    title: "一般",
    rows: [
      ["色", "ByLayer", "swatch"],
      ["画層", "0"],
      ["線種", "ByLayer", "line"],
      ["線種尺度", "1"],
      ["線の太さ", "ByLayer", "line"],
      ["透過性", "ByLayer"],
      ["厚さ", "0"],
    ],
  },
  { title: "3D 表示", rows: [["マテリアル", "ByLayer"]] },
  {
    title: "印刷スタイル",
    rows: [
      ["印刷スタイル", "ByColor", "dim"],
      ["印刷スタイル...", "なし"],
      ["アタッチされた...", "モデル", "dim"],
      ["印刷テーブル...", "使用できません。", "dim"],
    ],
  },
  {
    title: "ビュー",
    rows: [
      ["中心 X", "22513.923", "dim"],
      ["中心 Y", "6807.6683", "dim"],
      ["中心 Z", "0", "dim"],
      ["高さ", "209.7894", "dim"],
      ["幅", "480.9866", "dim"],
    ],
  },
  {
    title: "その他",
    rows: [
      ["注釈尺度", "1:1"],
      ["UCS アイコン...", "はい"],
      ["原点に UCS...", "はい"],
    ],
  },
];

function PropertyPalette() {
  return (
    <Palette>
      <PaletteBody>
        <PaletteTools>
          <Combo $w={150} $pad={3} $m={0}>
            <select aria-label="選択オブジェクト">
              <option>何も選択されていません</option>
            </select>
            <Caret $s={4} />
          </Combo>
          <Icon name="pickAdd" />
          <Icon name="selectAll" />
          <Icon name="quickSel" />
        </PaletteTools>
        <PaletteContent>
          <div>
            {sections.map((s) => (
              <div key={s.title}>
                <SectionButton>
                  {s.title}
                  <Caret $s={4} />
                </SectionButton>
                <PropTable>
                  <tbody>
                    {s.rows.map(([name, value, kind]) => (
                      <tr key={name}>
                        <NameCell scope="row" $long={name.endsWith("...")}>
                          {name}
                        </NameCell>
                        <ValueCell $dim={kind === "dim"} $latin={value.startsWith("By")}>
                          <ValueLine>
                            {kind === "swatch" && <Swatch />}
                            {kind === "line" && <LinePreview $w={46} />}
                            {value}
                          </ValueLine>
                        </ValueCell>
                      </tr>
                    ))}
                  </tbody>
                </PropTable>
              </div>
            ))}
          </div>
          <ScrollThumb />
        </PaletteContent>
      </PaletteBody>
      <PaletteStrip>
        <button aria-label="閉じる">
          <Icon name="close" />
        </button>
        <button aria-label="自動的に隠す">
          <Icon name="autohide" />
        </button>
        <button aria-label="設定">
          <Icon name="gear" size={12} />
        </button>
        <StripTitle>プロパティ</StripTitle>
        <Icon name="palette" />
      </PaletteStrip>
    </Palette>
  );
}

/* ---------- command line ---------- */

const Command = styled.div`
  position: absolute;
  left: 384px;
  right: 384px;
  bottom: 1px;
`;

const History = styled.div`
  display: flex;
  flex-direction: column;
  align-items: flex-start;
  gap: 4px;
  padding: 0 0 3px 61px;
`;

const HistoryLine = styled.span`
  padding: 0 2px;
  border-radius: 2px;
  white-space: pre;
  background-color: ${({ $bg }) => $bg};
  color: ${({ $fg }) => $fg};
`;

const CommandBar = styled.div`
  display: flex;
  height: 26px;
`;

const CommandHandle = styled.div`
  display: grid;
  grid-template-columns: 11px 14px 30px;
  align-items: center;
  justify-items: center;
  color: ${W};
  background-color: #2b313d;
`;

const CommandInput = styled.div`
  display: flex;
  flex: 1;
  align-items: center;
  padding: 0 4px;
  background-color: #fff;
  color: #111;
  white-space: nowrap;

  ${Caret} {
    margin-left: 3px;
    border-top-color: #555;
  }
`;

const CommandName = styled.b`
  margin: 0 6px 0 7px;
  font-size: 11px;
  color: #000;
`;

const Option = styled.button`
  margin-right: 4px;
  height: 17px;
  padding: 0 2px;
  border-radius: 3px;
  background-color: #cfd0d1;

  i {
    font-style: normal;
    color: #1414e0;
  }
`;

const PromptEnd = styled.span`
  margin-right: ${({ $auto }) => ($auto ? "auto" : "2px")};
  margin-left: ${({ $auto }) => ($auto ? 0 : 8)}px;
`;

const UpCaret = styled.span`
  border: 4px solid transparent;
  border-top: none;
  border-bottom-color: #555;
`;

/* ---------- footer ---------- */

const Footer = styled.footer`
  display: flex;
  align-items: flex-start;
  justify-content: space-between;
  height: 28px;
`;

const LayoutTabs = styled.div`
  display: flex;
  gap: 1px;
  padding-left: 12px;
`;

const LayoutTab = styled.button`
  width: ${({ $w }) => $w}px;
  height: 17px;
  color: ${({ $on }) => ($on ? "#fff" : "#a9aeb8")};
  background-color: ${({ $on }) => ($on ? "#3e4553" : "#2c343f")};
  font-size: 11px;
  font-weight: ${({ $on }) => ($on ? "bold" : "normal")};
  clip-path: polygon(0 0, 100% 0, calc(100% - 6px) 14px, calc(100% - 10px) 100%, 10px 100%, 6px 14px);

  svg {
    margin: 0 auto;
  }
`;

const StatusBar = styled.div`
  display: flex;
  gap: 3px;
  padding: 2px 2px 0 0;
`;

const StatusGroup = styled.div`
  display: flex;
  align-items: center;
  height: 23px;
  background-color: #3a4250;
`;

const StatusButton = styled.button`
  display: flex;
  align-items: center;
  justify-content: center;
  gap: 5px;
  width: ${({ $w = 24 }) => $w}px;
  height: 23px;
  background-color: ${({ $on }) => ($on ? "#5b8ec4" : "transparent")};
  font-size: 11px;
`;

const statusGroups = [
  [{ text: "モデル", w: 32 }],
  [{ icon: "grid", on: true }, { icon: "snap" }, { caret: true }],
  [{ icon: "ortho", on: true }, { icon: "polar" }, { caret: true }, { icon: "iso" }, { caret: true }],
  [{ icon: "otrack", on: true }, { icon: "osnap", on: true }, { caret: true }],
  [{ icon: "anno", on: true }, { icon: "annoAuto" }, { icon: "annoScale" }, { text: "1:1", caret: true, w: 31 }],
  [{ icon: "gear" }, { caret: true }],
  [{ icon: "plus" }],
  [{ icon: "isolate" }],
  [{ icon: "full" }, { icon: "menu" }],
];

export default function App() {
  return (
    <Window>
      <GlobalStyle />
      <Header>
        <Logo viewBox="0 0 46 30" aria-hidden="true">
          <path d="M7 29L16 1h8l9 28h-6l-3-9h-9l-2 9z" fill="#d3242b" />
          <path d="M20 7l-4 9h7z" fill="#222933" />
          <path d="M16 1h8l3 9-5-5-4 1-6 13z" fill="#ef5350" opacity=".55" />
          <path d="M7 29l3-9 6-1-3 10zM23 19l3-2 7 12h-6z" fill="#e98a86" opacity=".8" />
        </Logo>
        {ribbonTabs.map(([label, w], i) => (
          <RibbonTab key={label} $w={w} $on={i === 0} $small={w > 50}>
            {label}
          </RibbonTab>
        ))}
        <MinimizeButton aria-label="リボンを最小化">
          <MinimizeBox />
          <Caret />
        </MinimizeButton>
      </Header>
      <RibbonBar />
      <FileTabs>
        <FileTab $w={128}>スタート</FileTab>
        <FileTab $w={126} $pad={9} $on>
          Drawing1*
          <TabClose aria-label="閉じる">
            <Icon name="close" />
          </TabClose>
        </FileTab>
        <NewTab aria-label="新規図面">
          <Icon name="smallPlus" />
        </NewTab>
      </FileTabs>

      <Viewport>
        <Drawing />
        <ViewLabel>[−][平面図][2D ワイヤフレーム]</ViewLabel>
        <DynPrompt onSubmit={(e) => e.preventDefault()}>
          <PromptText htmlFor="factor">
            尺度を指定 または
            <DownKey viewBox="0 0 11 11">
              <path d="M.500.500h10v10H.500z" fill="#d8d8d8" stroke="#444" />
              <path d="M5.500 2v5M3 5l2.500 2.500L8 5M3 9h5" fill="none" stroke="#222" />
            </DownKey>
          </PromptText>
          <PromptBox>
            <PromptInput id="factor" defaultValue="0.7518" />
          </PromptBox>
          <PromptMenu>
            <button type="button">コピー(C)</button>
            <button type="button">参照(R)</button>
          </PromptMenu>
        </DynPrompt>
        <ViewCube />
        <East>東</East>
        <NavBar>
          <svg width="32" height="212" viewBox="0 0 32 212" fill="none" stroke="#4b4e52">
            <path d="M22 2l5 5M27 2l-5 5" />
            <path d="M4 30a11 11 0 0 1 11-11h11v11a11 11 0 0 1-22 0z" strokeWidth="1.500" />
            <circle cx="15" cy="30" r="6" strokeWidth="1.500" />
            <path d="M12 49h6l-3 3z" fill="#4b4e52" />
            <path d="M11 83c-3-5-6-8-7-11l2-1 5 5-3-12 2-1 3 10 1-11h2l1 11 3-9 2 1-2 12 4-4 2 1-5 9-3 2z" strokeWidth="1.300" />
            <path d="M4 90l15 14M4 104l14-14M4 94v-4h4M18 94v-4h-4M4 100v4h4" strokeWidth="1.500" />
            <circle cx="20" cy="105" r="5" fill="#686b6e" strokeWidth="1.500" />
            <path d="M23 109l4 4" strokeWidth="3" />
            <path d="M12 119h6l-3 3z" fill="#4b4e52" />
            <path d="M15 127l-4 5h3v16h3v-16h3z" strokeWidth="1.300" />
            <ellipse cx="15" cy="140" rx="11" ry="4" strokeWidth="1.300" />
            <path d="M12 157h6l-3 3z" fill="#4b4e52" />
            <path d="M4 169h5v6H4zM12 169h5v6h-5zM20 169h5v6h-5zM4 179h16v12H4z" strokeWidth="1.300" />
            <path d="M9 181l6 4-6 4z" fill="#4b4e52" />
            <circle cx="25" cy="205" r="3.500" />
            <path d="M23 205h4" />
          </svg>
        </NavBar>
        <WindowButtons>
          <button aria-label="元に戻す">
            <svg width="16" height="16" viewBox="0 0 16 16" fill="none" stroke="#fff" strokeWidth="2">
              <path d="M2 5h6v9H2zM5 2h6v10" />
            </svg>
          </button>
          <button aria-label="図面を閉じる">
            <Icon name="close" />
          </button>
        </WindowButtons>
        <PropertyPalette />
        <Command>
          <History>
            <HistoryLine $bg="#454b52" $fg="#a4a8ad">
              {"オブジェクトを選択:  もう一方のコーナーを指定:  認識された数:  2"}
            </HistoryLine>
            <HistoryLine $bg="#51565c" $fg="#c8cbcf">
              オブジェクトを選択:
            </HistoryLine>
            <HistoryLine $bg="#5d6166" $fg="#eceef0">
              基点を指定:
            </HistoryLine>
          </History>
          <CommandBar>
            <CommandHandle>
              <Icon name="grip" />
              <Icon name="close" />
              <Icon name="wrench" size={14} />
            </CommandHandle>
            <CommandInput>
              <Icon name="scale" />
              <Caret />
              <CommandName>SCALE</CommandName>
              尺度を指定 または
              <PromptEnd>[</PromptEnd>
              <Option>
                コピー(<i>C</i>)
              </Option>
              <Option>
                参照(<i>R</i>)
              </Option>
              <PromptEnd $auto>]:</PromptEnd>
              <UpCaret />
            </CommandInput>
          </CommandBar>
        </Command>
        <Bracket />
        <Note>
          <p>コマンドの説明分に「下向き矢印」がある場合、</p>
          <p>キーボードの下向き矢印を押してみてください。</p>
          <p>このコマンド中に実行可能な、別の操作が表示</p>
          <p>されます。また、ここに記載されている操作変更は、</p>
          <p>この画面を表示させなくても、</p>
          <p>「r」と入力して Enter キーで実行できます。</p>
        </Note>
      </Viewport>

      <Footer>
        <LayoutTabs>
          <LayoutTab $w={51} $on>
            モデル
          </LayoutTab>
          <LayoutTab $w={72}>レイアウト1</LayoutTab>
          <LayoutTab $w={72}>レイアウト2</LayoutTab>
          <LayoutTab $w={28} aria-label="新規レイアウト">
            <Icon name="smallPlus" />
          </LayoutTab>
        </LayoutTabs>
        <StatusBar>
          {statusGroups.map((group, i) => (
            <StatusGroup key={i}>
              {group.map(({ icon, text, caret, on, w }, j) => (
                <StatusButton key={j} $on={on} $w={w || (icon ? 24 : 16)} aria-label={icon || text || "メニュー"}>
                  {icon && <Icon name={icon} />}
                  {text}
                  {caret && <Caret $s={4} />}
                </StatusButton>
              ))}
            </StatusGroup>
          ))}
        </StatusBar>
      </Footer>
    </Window>
  );
}
